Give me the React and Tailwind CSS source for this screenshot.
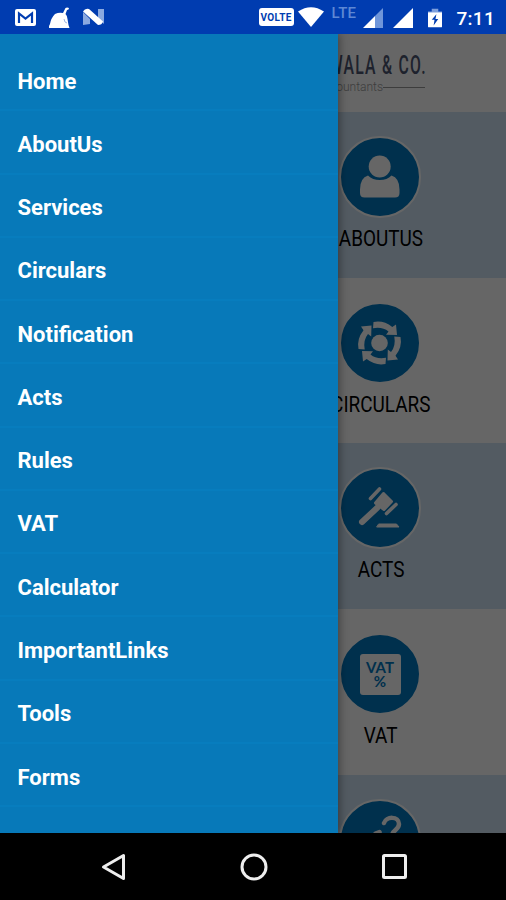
const MENU = [
  "Home",
  "AboutUs",
  "Services",
  "Circulars",
  "Notification",
  "Acts",
  "Rules",
  "VAT",
  "Calculator",
  "ImportantLinks",
  "Tools",
  "Forms",
];

const UserIcon = () => (
  <g fill="#fff">
    <circle cx="40.700" cy="30.500" r="11" />
    <path d="M29 39.500q-8 2.500-8 14v3.500q0 4.500 4.500 4.500h30.500q4.500 0 4.500-4.500v-3.500q0-11.500-8-14q-4.500 4.500-11.700 4.500t-11.800-4.500z" />
  </g>
);

const CycleIcon = () => (
  <g transform="translate(40.500 41)" fill="#fff">
    <circle r="8.300" />
    {[0, 90, 180, 270].map((deg) => (
      <path
        key={deg}
        transform={`rotate(${deg})`}
        d="M-6 -21Q4 -23 12.800 -16L16.500 -18.500L17.500 -8L6.500 -8.300L9 -11.500Q3 -16.500 -6.500 -14.800z"
      />
    ))}
  </g>
);

const GavelIcon = () => (
  <g fill="#fff" stroke="#fff" strokeLinecap="round" strokeLinejoin="round">
    <path d="M36.500 36L44.500 26.500L52.500 34.500L45 42.500z" strokeWidth="3" />
    <path d="M31.500 31.500L40.500 22M47.500 46.500L57 37.500" strokeWidth="3.600" />
    <path d="M38.500 40.500L23 55" strokeWidth="6" />
    <path d="M40 57h17.500l2.500 3h-22z" strokeWidth="1" />
  </g>
);

const QuestionIcon = () => (
  <g fill="none" stroke="#fff" strokeWidth="4.500" strokeLinecap="round">
    <path d="M45 24c2-7 15-7 15 1c0 6-7 6-7 12M36.500 34.500l4-1.500" />
  </g>
);

const TILES = [
  { label: "ABOUTUS", icon: <UserIcon /> },
  { label: "CIRCULARS", icon: <CycleIcon /> },
  { label: "ACTS", icon: <GavelIcon /> },
  { label: "VAT", icon: null },
  { label: "", icon: <QuestionIcon /> },
];

function StatusBar() {
  return (
    <header className="flex h-[34px] shrink-0 items-center bg-[#003cb0] pl-[15px] pr-[11px] text-white">
      <svg width="21" height="17" viewBox="0 0 21 17">
        <rect width="21" height="17" rx="2" fill="#fff" />
        <path d="M4 14V4.500l6.500 5l6.500-5V14" fill="none" stroke="#003cb0" strokeWidth="2.200" />
      </svg>
      <svg className="ml-3 mt-[2px]" width="23" height="22" viewBox="0 0 23 22">
        <path d="M7 7q4-2 8-1l2.500-5q1.500-1 3.500 0q0 2-2 2l-1.500 4q2 2 2 5l1 6l1 3H1q-.5-2 1-4q1-6 5-10z" fill="#fff" />
        <path d="M16 12l1 3l2 1" fill="none" stroke="#9fb8e4" />
      </svg>
      <svg className="ml-3" width="22" height="18" viewBox="0 0 22 18">
        <path d="M0 4l7 7v5l-7 1zM15 1h6v15l-6-6z" fill="#8aa9e0" />
        <path d="M0 3.500q2-3.500 6-2.500l14 12.500q-1 3.500-5 3.500z" fill="#fff" />
      </svg>
      <div className="ml-auto flex items-center">
        <span className="flex h-[18px] w-[35px] items-center justify-center rounded-[3px] bg-white font-['Roboto',sans-serif] text-[10px] font-bold tracking-[0.300px] text-[#003cb0]">
          VOLTE
        </span>
        <svg className="ml-1" width="26" height="20" viewBox="0 0 26 20">
          <path d="M0 4.500Q13-4 26 4.500L13 20z" fill="#fff" />
        </svg>
        <span className="mb-[7px] ml-2 font-['Roboto',sans-serif] text-[15px] font-medium leading-none tracking-[0.300px] text-[#5d88d4]">LTE</span>
        <svg className="ml-[7px] mt-[2px]" width="20" height="20" viewBox="0 0 20 20">
          <path d="M12 8L20 0V20H12z" fill="#6f96da" />
          <path d="M0 20L12 8V20z" fill="#fff" />
        </svg>
        <svg className="ml-[10px] mt-[2px]" width="20" height="20" viewBox="0 0 20 20">
          <path d="M0 20L20 0V20z" fill="#fff" />
        </svg>
        <svg className="ml-[15px] mt-[2px]" width="14" height="20" viewBox="0 0 15 20">
          <path d="M4 0h7v3h4v4H0V3h4z" fill="#7f9fdc" />
          <path d="M0 4h15v15q0 1-1 1H1q-1 0-1-1z" fill="#fff" />
          <path d="M9 6l-5 6h3l-1 6l5-7H8z" fill="#003cb0" />
        </svg>
        <span className="ml-[14px] mt-[2px] font-['Roboto',sans-serif] text-[19px] font-medium leading-none tracking-[0.300px]">7:11</span>
      </div>
    </header>
  );
}

function Tile({ label, icon, shaded }) {
  return (
    <section className={`flex h-[165.700px] shrink-0 justify-end ${shaded ? "bg-[#cfe4f5]" : "bg-white"}`}>
      <div className="flex w-[252px] flex-col items-center pt-6">
        <div className="relative">
          <svg width="82" height="82" viewBox="0 0 82 82">
            <circle cx="41" cy="41" r="40" fill="#0078c0" stroke="#fff" strokeWidth="2" />
            {icon}
          </svg>
          {label === "VAT" && (
            <div className="absolute left-[20.500px] top-[20.500px] flex h-[41px] w-[41px] flex-col items-center justify-center rounded-[3px] bg-white font-['Lato',sans-serif] text-[15px] font-bold leading-[14px] text-[#0078c0]">
              <span>VAT</span>
              <span>%</span>
            </div>
          )}
        </div>
        <span className="mt-2 translate-x-px scale-x-[0.86] font-['Roboto',sans-serif] text-[22px] leading-[26px] text-black">{label}</span>
      </div>
    </section>
  );
}

export default function App() {
  return (
    <div className="flex h-[900px] w-[506px] flex-col overflow-hidden bg-black">
      <StatusBar />
      <main className="relative h-[799px] shrink-0 overflow-hidden bg-white">
        <div className="flex h-[78px] flex-col items-end pr-[81px] pt-[17px] text-[#4c5570]">
          <span className="origin-right translate-x-[2px] scale-x-[0.630] whitespace-nowrap font-['Roboto',sans-serif] text-[25px] font-medium leading-[29px] tracking-[2px]">
            WALA & CO.
          </span>
          <div className="flex items-center text-[#999]">
            <span className="font-['Roboto',sans-serif] text-[12px] font-light leading-[14px]">countants</span>
            <span className="h-px w-[42px] bg-[#999]" />
          </div>
        </div>
        {TILES.map((tile, i) => (
          <Tile key={i} {...tile} shaded={i % 2 === 0} />
        ))}
        <div className="absolute inset-0 bg-black/60" />
        <nav className="absolute inset-y-0 left-0 w-[338px] bg-[#0779b9] pt-[14px] shadow-[2px_0_8px_rgba(0,0,0,0.35)]">
          <ul>
            {MENU.map((item) => (
              <li
                key={item}
                className="flex h-[63.270px] items-center border-b-2 border-[#077dbe] pl-[17.500px] pt-[5px] font-['Roboto',sans-serif] text-[22px] font-bold text-white"
              >
                {item}
              </li>
            ))}
          </ul>
        </nav>
      </main>
      <footer className="flex flex-1 items-center justify-between bg-black pl-[101px] pr-[99px]">
        <svg width="25" height="28" viewBox="0 0 25 28">
          <path d="M2.500 14L22.500 2.500V25.500z" fill="none" stroke="#eee" strokeWidth="3" strokeLinejoin="round" />
        </svg>
        <svg width="28" height="28" viewBox="0 0 28 28">
          <circle cx="14" cy="14" r="12" fill="none" stroke="#eee" strokeWidth="3" />
        </svg>
        <svg width="25" height="25" viewBox="0 0 25 25">
          <rect x="1.500" y="1.500" width="22" height="22" rx="1" fill="none" stroke="#eee" strokeWidth="3" />
        </svg>
      </footer>
    </div>
  );
}
